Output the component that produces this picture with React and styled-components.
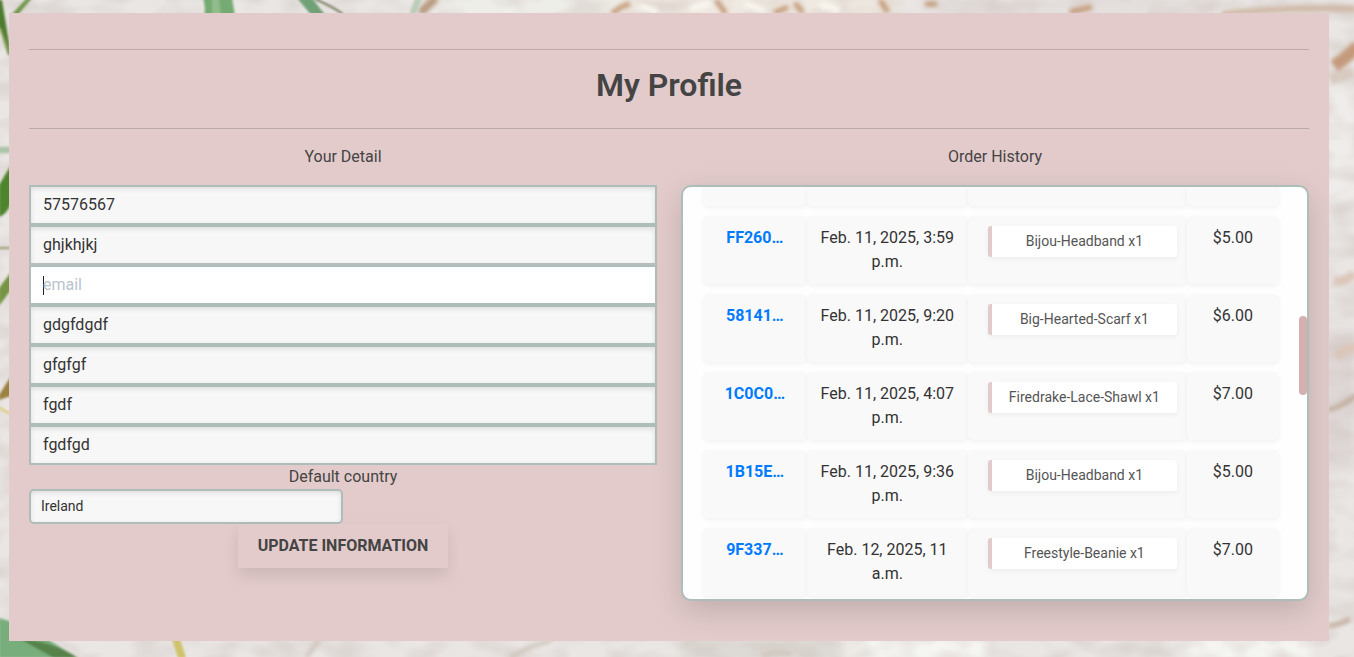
import React from "react";
import styled, { createGlobalStyle, css } from "styled-components";

const GlobalStyle = createGlobalStyle`
  *, *::before, *::after { box-sizing: border-box; }
  body {
    margin: 0;
    background: #e6e2df;
    color: #444;
    font-family: Roboto, "Liberation Sans", sans-serif;
    font-size: 16px;
    line-height: 24px;
  }
`;

const Page = styled.div`
  display: grid;
  min-height: 100vh;
  overflow: hidden;

  > * { grid-area: 1 / 1; }
`;

const Backdrop = styled.svg`
  width: 100%;
  height: 100%;
  min-height: 0;
  contain: size;
`;

const Panel = styled.main`
  position: relative;
  align-self: start;
  margin: 13px 25px 16px 9px;
  padding: 36px 20px 40px;
  background: #e3cbcb;
  overflow: hidden;
  text-align: center;
`;

const Rule = styled.hr`
  margin: 0;
  border: 0;
  border-top: 1px solid #bba8ab;
`;

const Title = styled.h1`
  margin: 16px 0 24px;
  font-size: 32px;
  line-height: 38px;
  font-weight: 600;
`;

const Columns = styled.div`
  display: grid;
  grid-template-columns: minmax(0, 1fr) minmax(0, 1fr);
  gap: 24px;
  padding-top: 16px;
`;

const SectionTitle = styled.p`
  margin: 0 0 16px;
`;

const Form = styled.form`
  display: flex;
  flex-direction: column;
`;

const field = css`
  border: 2px solid #adbdb9;
  background-color: #f7f7f7;
  color: #333;
  font-family: inherit;
  box-shadow: inset 0 2px 5px rgba(0, 0, 0, 0.1);
  outline: none;
`;

const TextInput = styled.input`
  ${field}
  width: 100%;
  height: 40px;
  padding: 0 12px 2px;
  font-size: 16px;

  &::placeholder { color: #b9c4d0; opacity: 1; }

  ${(p) =>
    p.$active &&
    css`
      background: linear-gradient(#222, #222) 12px center / 1px 19px no-repeat #fff;
      box-shadow: 0 0 0 2px rgba(226, 202, 202, 0.2);
      caret-color: transparent;
    `}
`;

const CountrySelect = styled.select`
  ${field}
  appearance: none;
  width: 50%;
  height: 35px;
  padding: 0 10px 2px;
  border-radius: 5px;
  font-size: 14px;
`;

const SubmitButton = styled.button`
  align-self: center;
  height: 44px;
  padding: 0 20px;
  border: 0;
  background: #e3cbcb;
  color: #444;
  font: 700 16px/24px Roboto, "Liberation Sans", sans-serif;
  text-transform: uppercase;
  box-shadow: 0 8px 15px rgba(0, 0, 0, 0.1);
`;

const Orders = styled.div`
  display: flex;
  height: 416px;
  padding-left: 20px;
  border: 2px solid #adbdb9;
  border-radius: 10px;
  background: #fefefe;
  overflow: hidden;
  box-shadow: 0 10px 30px rgba(0, 0, 0, 0.15);
`;

const TableWrap = styled.div`
  flex: 1;
  min-width: 0;
  margin: -10px 20px 0 0;
`;

const Table = styled.table`
  width: 100%;
  table-layout: fixed;
  border-collapse: separate;
  border-spacing: 0 10px;
`;

const Cell = styled.td`
  height: ${(p) => (p.$tail ? 19 : 68)}px;
  padding: ${(p) => (p.$tail ? "0" : p.$items ? "10px 10px 10px 20px" : "10px")};
  border-radius: ${(p) => (p.$tail ? "0 0 5px 5px" : "5px")};
  background: #f9f9f9;
  color: #333;
  vertical-align: top;
  box-shadow: 0 2px 5px rgba(0, 0, 0, 0.05);
`;

const OrderLink = styled.a`
  color: #007bff;
  font-weight: 700;
  text-decoration: none;
`;

const Item = styled.div`
  padding: 5px 10px;
  border-left: 4px solid #e3cbcb;
  border-radius: 3px;
  background: #fff;
  color: #555;
  font-size: 14px;
  line-height: 21px;
  box-shadow: 0 2px 5px rgba(0, 0, 0, 0.05);
`;

const ScrollTrack = styled.div`
  display: grid;
  width: 8px;
  grid-template-rows: 129fr 79fr 204fr;
`;

const ScrollThumb = styled.div`
  grid-row: 2;
  border-radius: 4px;
  background: #d4b0b0;
`;

const fields = [
  { label: "Phone number", value: "57576567" },
  { label: "Full name", value: "ghjkhjkj" },
  { label: "Email", value: "", placeholder: "email" },
  { label: "Street address 1", value: "gdgfdgdf" },
  { label: "Street address 2", value: "gfgfgf" },
  { label: "Town or city", value: "fgdf" },
  { label: "County", value: "fgdfgd" },
];

const orders = [
  { id: "FF260…", date: "Feb. 11, 2025, 3:59 p.m.", item: "Bijou-Headband x1", total: "$5.00" },
  { id: "58141…", date: "Feb. 11, 2025, 9:20 p.m.", item: "Big-Hearted-Scarf x1", total: "$6.00" },
  { id: "1C0C0…", date: "Feb. 11, 2025, 4:07 p.m.", item: "Firedrake-Lace-Shawl x1", total: "$7.00" },
  { id: "1B15E…", date: "Feb. 11, 2025, 9:36 p.m.", item: "Bijou-Headband x1", total: "$5.00" },
  { id: "9F337…", date: "Feb. 12, 2025, 11 a.m.", item: "Freestyle-Beanie x1", total: "$7.00" },
];

// Woven cloth with a few leaves, visible round the panel.
function ClothBackdrop() {
  return (
    <Backdrop viewBox="0 0 1354 657" preserveAspectRatio="none" aria-hidden="true">
      <defs>
        <filter id="soft" x="-20%" y="-20%" width="140%" height="140%">
          <feGaussianBlur stdDeviation="1" />
        </filter>
        <filter id="blurry" x="-20%" y="-20%" width="140%" height="140%">
          <feGaussianBlur stdDeviation="2" />
        </filter>
        <filter id="haze" x="-50%" y="-50%" width="200%" height="200%">
          <feGaussianBlur stdDeviation="4" />
        </filter>
        <filter id="weave" x="0" y="0" width="100%" height="100%">
          <feTurbulence type="fractalNoise" baseFrequency="0.03 0.05" numOctaves="2" seed="8" />
          <feColorMatrix values="0 0 0 0 0.6  0 0 0 0 0.52  0 0 0 0 0.49  1 0 0 0 -0.38" />
        </filter>
      </defs>
      <rect width="1354" height="657" fill="#e9e6e4" />
      <g filter="url(#haze)">
        <path d="M440-5H620V18H440z" fill="#eeeee8" />
        <path d="M620-5H900V18H620z" fill="#efe9e1" />
        <path d="M920-5H1215V14H920z" fill="#e4dfdd" />
        <path d="M1325 90h30v110h-30z" fill="#efedeb" />
        <path d="M1325 330h30v140h-30z" fill="#ded7d5" />
        <path d="M845 638h140v24H845zM1190 638h120v24h-120z" fill="#f5f5f2" />
        <path d="M680 638h160v24H680z" fill="#ddd9d4" />
      </g>
      <rect width="1354" height="657" filter="url(#weave)" />
      <g filter="url(#blurry)" fill="none">
        <path d="M612 14q8-8 18-10M716 0l10 14M774 13l14-6M795 3l8 10M880 0l8 12M925 4h12M1070 12l22-5" stroke="#c49a78" strokeWidth="5" />
        <path d="M640 6l18 6M690 9l20-6M745 4l20 7M820 5l20 5" stroke="#faf7f1" strokeWidth="6" />
        <path d="M1222 14q70-8 134-5" stroke="#cfb8a4" strokeWidth="6" />
        <path d="M1334 66q12-8 24-20" stroke="#c39a7c" strokeWidth="13" />
        <path d="M1330 79l24-7" stroke="#d8cac1" strokeWidth="12" />
        <path d="M1334 281q12 2 20-8M1336 357q10-10 22-10" stroke="#dcc6b9" strokeWidth="9" />
        <path d="M1328 410q16-4 28-15M1328 626q12-1 22-7" stroke="#bfa795" strokeWidth="4" />
        <path d="M420 13l16-15" stroke="#b79a7e" strokeWidth="8" />
        <path d="M306 658l14-20M510 658q14-10 42-18M762 656q14-5 30-2" stroke="#cfc5bb" strokeWidth="4" />
      </g>
      <g filter="url(#soft)">
        <path d="M-2 0h4l9 55H8L-2 24z" fill="#4d7b2d" />
        <path d="M0 28l10 27" stroke="#8aa55c" strokeWidth="2" />
        <path d="M11 15L28-3h5L17 16z" fill="#71994d" />
        <path d="M203-2h29l3 18h-31q2-8-1-18z" fill="#75aa72" />
        <path d="M212-2h7l2 18h-9z" fill="#90bd8b" />
        <path d="M297-2h15l14 18h-14z" fill="#70a177" />
        <path d="M315-1q18 8 28 15" stroke="#777d60" strokeWidth="2" fill="none" />
        <path d="M409 14l6-15h7l-6 15z" fill="#b9cdb8" />
        <path d="M-1 147h12v6H-1z" fill="#abc4a8" />
        <path d="M-1 185l12-20v39q-5 11-12 13z" fill="#4f842f" />
        <path d="M-1 248h12" stroke="#969b74" strokeWidth="2" />
        <path d="M-1 288l12-16v18l-12 16z" fill="#759444" />
        <path d="M-1 395l12-19v20l-12 4z" fill="#9b8142" />
        <path d="M-1 408l12 6" stroke="#ddca74" strokeWidth="2" />
        <path d="M-1 618q34 9 77 40H-1z" fill="#78ad7c" />
        <path d="M20 639q35 3 58 19H54z" fill="#578348" />
        <path d="M172 639h8l6 19h-8z" fill="#cfc36b" />
      </g>
    </Backdrop>
  );
}

function ProfileForm() {
  return (
    <Form onSubmit={(e) => e.preventDefault()}>
      {fields.map((f) => (
        <TextInput
          key={f.label}
          type="text"
          aria-label={f.label}
          defaultValue={f.value}
          placeholder={f.placeholder}
          $active={Boolean(f.placeholder)}
        />
      ))}
      <label htmlFor="country">Default country</label>
      <CountrySelect id="country" defaultValue="Ireland">
        <option>Ireland</option>
      </CountrySelect>
      <SubmitButton type="submit">Update Information</SubmitButton>
    </Form>
  );
}

function OrderHistory() {
  return (
    <Orders>
      <TableWrap>
        <Table>
          <colgroup>
            <col width="18%" />
            <col width="28%" />
            <col width="38%" />
            <col width="16%" />
          </colgroup>
          <tbody>
            <tr>
              <Cell $tail />
              <Cell $tail />
              <Cell $tail />
              <Cell $tail />
            </tr>
            {orders.map((o) => (
              <tr key={o.id}>
                <Cell><OrderLink href="#order">{o.id}</OrderLink></Cell>
                <Cell>{o.date}</Cell>
                <Cell $items><Item>{o.item}</Item></Cell>
                <Cell>{o.total}</Cell>
              </tr>
            ))}
          </tbody>
        </Table>
      </TableWrap>
      <ScrollTrack><ScrollThumb /></ScrollTrack>
    </Orders>
  );
}

export default function App() {
  return (
    <>
      <GlobalStyle />
      <Page>
        <ClothBackdrop />
        <Panel>
          <Rule />
          <Title>My Profile</Title>
          <Rule />
          <Columns>
            <section>
              <SectionTitle>Your Detail</SectionTitle>
              <ProfileForm />
            </section>
            <section>
              <SectionTitle>Order History</SectionTitle>
              <OrderHistory />
            </section>
          </Columns>
        </Panel>
      </Page>
    </>
  );
}
